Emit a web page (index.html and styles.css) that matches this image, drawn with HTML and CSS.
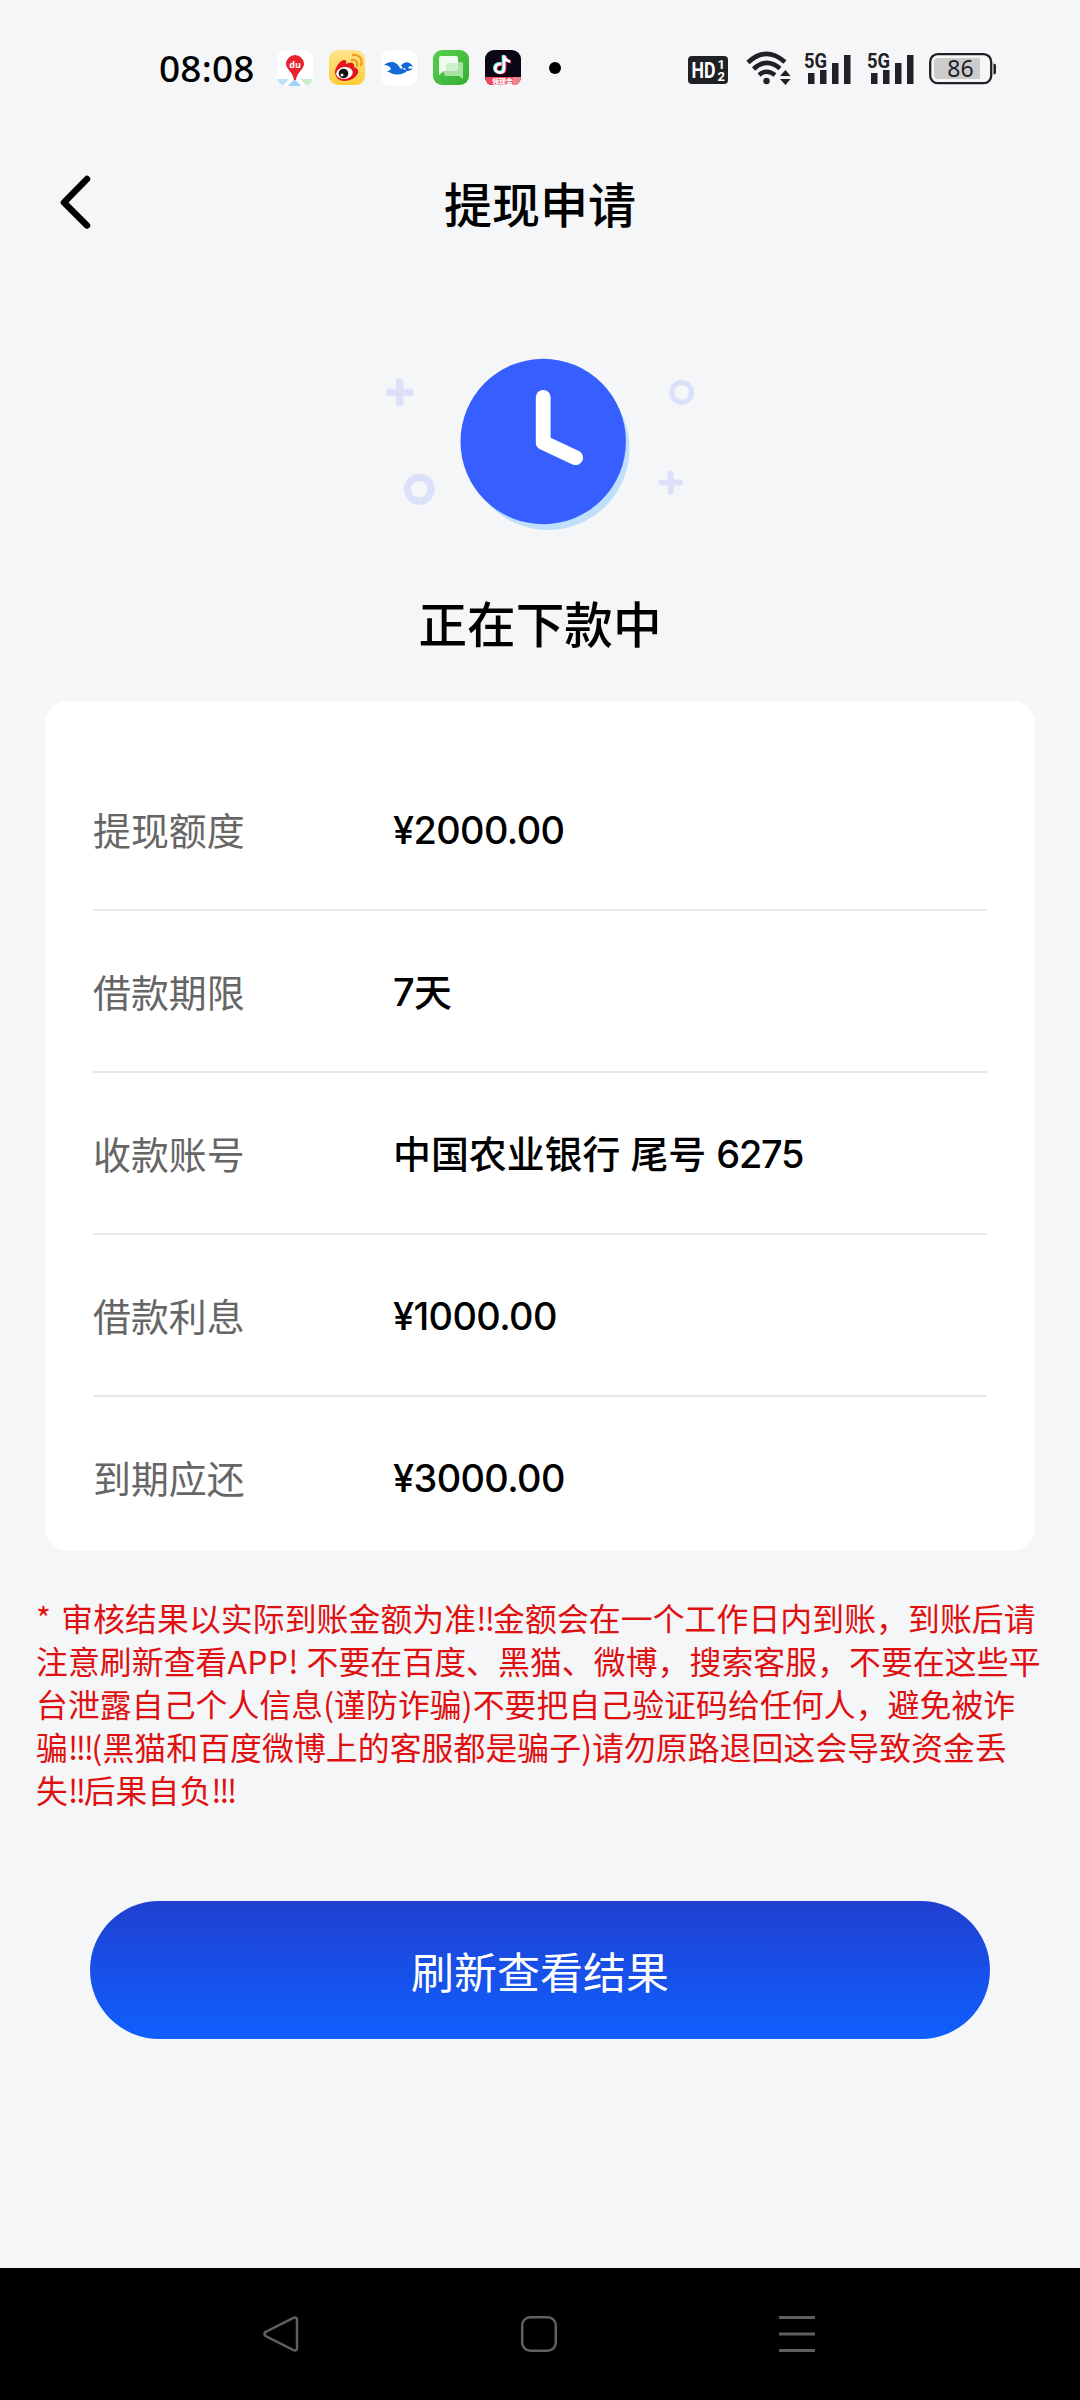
FILE: index.html
```html
<!DOCTYPE html>
<html lang="zh-CN">
<head>
<meta charset="utf-8">
<title>提现申请</title>
<link rel="stylesheet" href="styles.css">
</head>
<body>
<div class="screen">
  <header class="status-bar">
    <div class="status-left">
      <span class="time">08:08</span>
      <svg class="app" viewBox="0 0 36 36"><defs><clipPath id="tile"><rect width="36" height="36" rx="9"/></clipPath></defs><g clip-path="url(#tile)"><rect width="36" height="36" fill="#fff"/><path d="M0 29H12L6 36H0Z" fill="#bfe3fa"/><path d="M17.500 29L24 36H11Z" fill="#9fd2f5"/><path d="M24 29H36V36H29Z" fill="#c9edc4"/><path d="M18 5a9 9 0 0 1 9 9c0 5-7 8-8 16h-2c-1-8-8-11-8-16a9 9 0 0 1 9-9Z" fill="#e5242f"/></g><text x="18" y="17.500" class="du">du</text></svg>
      <svg class="app" viewBox="0 0 36 36"><defs><linearGradient id="wb" x2="0" y2="1"><stop stop-color="#ffe48c"/><stop offset="1" stop-color="#ffcd36"/></linearGradient></defs><rect width="36" height="35" rx="9" fill="url(#wb)"/><path d="M6 22c0-5 6-13 10-12 2 1 1 3 1 4 4-2 9-2 8 3 3 1 5 3 4 6-2 5-8 8-14 8-5 0-9-4-9-9Z" fill="#e01622"/><ellipse cx="15.500" cy="23" rx="8.300" ry="6" transform="rotate(-9 15.500 23)" fill="#fff"/><circle cx="14.500" cy="23.500" r="4.800" fill="#111"/><circle cx="13" cy="25" r="1.500" fill="#fff"/><path d="M23 10c4-.6 6 2 5 6M24 5c6-1 10 4 8 10" fill="none" stroke="#f39a20" stroke-width="2.300" stroke-linecap="round"/></svg>
      <svg class="app" viewBox="0 0 36 36"><rect width="36" height="36" rx="9" fill="#fff"/><path d="M3 15c5-4 12-5 16 3 1 1 2 1 3 0-1-1-1-2-2-2 3-5 9-5 12 1-2-1-4-1-5 1 2 1 4 1 5 0-1 2-3 3-6 3-4 4-12 5-18 1H6l4-3c-1-3-4-4-7-4Z" fill="#1469d8"/><circle cx="23.500" cy="19" r="1" fill="#fff"/></svg>
      <svg class="app" viewBox="0 0 36 36"><defs><linearGradient id="msg" x2="1" y2="1"><stop stop-color="#58d04d"/><stop offset="1" stop-color="#35ae34"/></linearGradient></defs><rect width="36" height="35" rx="9" fill="url(#msg)"/><path d="M15 12h13q2 0 2 2v15l-4-3H13q-2 0-2-2v-8Z" fill="#a7e2a2"/><path d="M8 6h15q2 0 2 2v11q0 2-2 2H11l-5 4V8q0-2 2-2Z" fill="#eefbee"/><path d="M15 13h10v6q0 2-2 2H13v-6q0-2 2-2Z" fill="#d0f0cd"/></svg>
      <svg class="app" viewBox="0 0 36 36"><g clip-path="url(#tile)"><rect width="36" height="35" fill="#0b0714"/><g fill="none" stroke-width="2.800"><path d="M15.500 13.500c-8-1-8 9-1.500 8.500 3 0 4-2 4-4V5c1 4 3 5.500 6 6" stroke="#25e8e5"/><path d="M17.500 14.500c-8-1-8 9-1.500 8.500 3 0 4-2 4-4V6c1 4 3 5.500 6 6" stroke="#fb2d55"/><path d="M16.500 14c-8-1-8 9-1.500 8.500 3 0 4-2 4-4V5.500c1 4 3 5.500 6 6" stroke="#fff"/></g><path d="M0 27h36v8H0Z" fill="#ed4b62"/><path d="M28 27h8v8h-8Z" fill="#fff" opacity=".3"/></g><text x="17.500" y="33.500" class="ribbon">领现金</text></svg>
      <i class="more-dot"></i>
    </div>
    <div class="status-right">
      <svg class="hd" viewBox="0 0 40 28"><rect width="40" height="28" rx="4" fill="#202124"/><text x="3.500" y="22" class="hd-text" textLength="24" lengthAdjust="spacingAndGlyphs">HD</text><text x="29.500" y="13" class="hd-num">1</text><text x="29.500" y="25" class="hd-num">2</text></svg>
      <svg class="wifi" viewBox="0 0 46 36"><g fill="none" stroke="#202124" stroke-width="4.600"><path d="M2 12.500Q20-4.500 39 12"/><path d="M7.500 19Q20.500 7 34 18.500"/><path d="M13 25Q20.500 18.500 29 25"/></g><circle cx="20.500" cy="31" r="3.200" fill="#202124"/><path d="M39.500 20l5 6H34ZM34 29h10.500l-5 6Z" fill="#202124"/></svg>
      <svg class="signal" viewBox="0 0 48 36"><path d="M4 23h6.500v11H4ZM16 20h6.500v14H16ZM28 13h6.500v21H28ZM40 5h6.500v29H40Z" fill="#202124"/><text x="0" y="17.500" class="net" textLength="23" lengthAdjust="spacingAndGlyphs">5G</text></svg>
      <svg class="signal second" viewBox="0 0 48 36"><path d="M4 23h6.500v11H4ZM16 20h6.500v14H16ZM28 13h6.500v21H28ZM40 5h6.500v29H40Z" fill="#202124"/><text x="0" y="17.500" class="net" textLength="23" lengthAdjust="spacingAndGlyphs">5G</text></svg>
      <svg class="battery" viewBox="0 0 68 32"><rect x="1.200" y="1.200" width="61" height="29" rx="7.500" fill="none" stroke="#202124" stroke-width="2.300"/><path d="M9 5h42v21H9q-4 0-4-4V9q0-4 4-4Z" fill="#cbcccd"/><path d="M64.500 10.500q2.500 0 2.500 2v7q0 2-2.500 2Z" fill="#202124"/><text x="31.500" y="23.500" class="percent">86</text></svg>
    </div>
  </header>

  <nav class="title-bar">
    <svg class="back" viewBox="0 0 32 54"><path d="M28 4L5 27.500L28 50.500" fill="none" stroke="#000" stroke-width="6.500" stroke-linecap="round" stroke-linejoin="round"/></svg>
    <h1>提现申请</h1>
  </nav>

  <main>
    <section class="state">
      <svg class="clock" viewBox="0 0 320 180">
        <circle cx="168" cy="98.500" r="81.500" fill="#bfdffb"/>
        <circle cx="163.200" cy="91.500" r="82.700" fill="#375fff"/>
        <path d="M163.200 47.300V92.500L195.700 107.700" fill="none" stroke="#fff" stroke-width="14.800" stroke-linecap="round" stroke-linejoin="round"/>
        <g fill="none" stroke="#dce1fa" stroke-linecap="round">
          <path d="M9.500 42.500h20.500M19.700 32.200v20.600" stroke-width="7.500"/>
          <path d="M281.500 132.500h18.500M290.700 123.300v18.500" stroke-width="6"/>
          <circle cx="39.300" cy="139.200" r="11.900" stroke-width="7.200"/>
          <circle cx="301.700" cy="42.500" r="9.900" stroke-width="5.200"/>
        </g>
      </svg>
      <h2>正在下款中</h2>
    </section>

    <dl class="card">
      <div class="row"><dt>提现额度</dt><dd><span class="num">¥2000.00</span></dd></div>
      <div class="row"><dt>借款期限</dt><dd><span class="num">7</span>天</dd></div>
      <div class="row"><dt>收款账号</dt><dd>中国农业银行 尾号 <span class="num tail">6275</span></dd></div>
      <div class="row"><dt>借款利息</dt><dd><span class="num">¥1000.00</span></dd></div>
      <div class="row"><dt>到期应还</dt><dd><span class="num">¥3000.00</span></dd></div>
    </dl>

    <p class="notice"><span class="star">*</span> 审核结果以实际到账金额为准<b class="wide">!!</b>金额会在一个工作日内到账，到账后请<br>注意刷新查看<span class="latin">APP! </span>不要在百度、黑猫、微博，搜索客服，不要在这些平<br>台泄露自己个人信息(谨防诈骗)不要把自己验证码给任何人，避免被诈<br>骗<b>!!!</b>(黑猫和百度微博上的客服都是骗子)请勿原路退回这会导致资金丢<br>失<b>!!</b>后果自负<b>!!!</b></p>

    <button class="refresh" type="button">刷新查看结果</button>
  </main>

  <footer class="system-nav">
    <svg viewBox="0 0 36 36"><path d="M30.500 1.800L2.500 16Q.5 18 2.500 20L30.500 34.200Q34 35.500 34 32V4Q34 .5 30.500 1.800Z"/></svg>
    <svg viewBox="0 0 36 36"><rect x="1.200" y="1.200" width="33.600" height="33.600" rx="8"/></svg>
    <svg viewBox="0 0 36 36"><path d="M0 1.500H36M0 18H36M0 34.500H36" stroke-width="3"/></svg>
  </footer>
</div>
</body>
</html>
```
FILE: styles.css
```css
* { box-sizing: border-box; }

body {
  margin: 0;
  background: #f4f6f8;
  color: #000;
  font-family: "Noto Sans CJK SC", sans-serif;
}

.screen {
  display: flex;
  flex-direction: column;
  width: 1080px;
  height: 2400px;
  overflow: hidden;
}

svg { display: block; flex: none; overflow: visible; }

/* System status bar */
.status-bar {
  display: flex;
  justify-content: space-between;
  height: 136px;
  padding: 0 83px 0 159px;
}

.status-left, .status-right { display: flex; align-items: center; }

.time {
  width: 118px;
  font: 500 37px/40px "Noto Sans", sans-serif;
  letter-spacing: .2px;
}

.app { width: 36px; height: 36px; margin-right: 16px; }

.more-dot {
  width: 12px;
  height: 12px;
  margin-left: 12px;
  border-radius: 50%;
  background: #000;
}

.hd { width: 40px; height: 28px; margin: 4px 18px 0 0; }
.wifi { width: 46px; height: 36px; margin-right: 12px; }
.signal { width: 48px; height: 36px; margin-right: 15px; }
.signal.second { margin-right: 14px; }
.battery { width: 68px; height: 32px; margin-top: 1px; }

.du { font: 700 9px "Open Sans", sans-serif; fill: #fff; text-anchor: middle; }
.ribbon { font: 900 7px "Noto Sans CJK SC", sans-serif; fill: #fff; text-anchor: middle; }
.hd-text { font: 700 22px Roboto, sans-serif; fill: #fff; }
.hd-num { font: 700 13px/1 Roboto, sans-serif; fill: #fff; }
.net { font: 700 21px Roboto, sans-serif; fill: #202124; stroke: #f4f6f8; stroke-width: 2px; paint-order: stroke; }
.percent { font: 400 23px "Noto Sans", sans-serif; fill: #202124; text-anchor: middle; }

/* Page title */
.title-bar {
  display: grid;
  grid-template-columns: 120px 1fr 120px;
  align-items: center;
  height: 132px;
}

.back { width: 32px; height: 54px; margin-left: 59px; }

h1, h2 { margin: 0; font-weight: 500; text-align: center; }
h1 { font-size: 48px; line-height: 72px; }

main { flex: 1; }

.state {
  display: flex;
  flex-direction: column;
  align-items: center;
  height: 433px;
  padding-top: 82px;
}

.clock { width: 320px; height: 180px; }
h2 { margin-top: 56px; font-size: 48.600px; line-height: 72px; }

/* Loan details */
.card {
  height: 850px;
  margin: 0 45px;
  padding: 48px 48px 0;
  border-radius: 22px;
  background: #fff;
}

.row {
  display: flex;
  height: 162px;
  padding-top: 52px;
  border-bottom: 2px solid #e8e8e8;
  font-size: 37.900px;
  line-height: 56px;
}

.row:last-child { border-bottom: 0; }
dt { width: 300px; color: #666; }
dd { margin: 0; padding-top: 1px; font-family: Inter, "Noto Sans CJK SC", sans-serif; font-weight: 500; white-space: nowrap; }
.num { font-weight: 450; letter-spacing: -.6px; }
.tail { letter-spacing: -1.300px; }

/* Red warning text */
.notice {
  margin: 45px 0 0 36px;
  color: #e01010;
  font-size: 31.800px;
  line-height: 43px;
  letter-spacing: .12px;
  white-space: nowrap;
}

.notice b { font-weight: 400; letter-spacing: -2.400px; }
.notice .wide { letter-spacing: -1.800px; }
.star { margin-right: 3px; }
.latin { letter-spacing: .4px; }

.refresh {
  display: block;
  width: 900px;
  height: 138px;
  margin: 90px auto 0;
  padding: 0;
  border: 0;
  border-radius: 69px;
  background: linear-gradient(#2040d0, #105fff);
  color: #fff;
  font: 400 43px/64px "Noto Sans CJK SC", sans-serif;
}

/* System navigation keys */
.system-nav {
  display: flex;
  justify-content: space-between;
  height: 132px;
  padding: 48px 265px 0 263px;
  background: #000;
}

.system-nav svg { width: 36px; height: 36px; fill: none; stroke: #606060; stroke-width: 2.500px; }
```
